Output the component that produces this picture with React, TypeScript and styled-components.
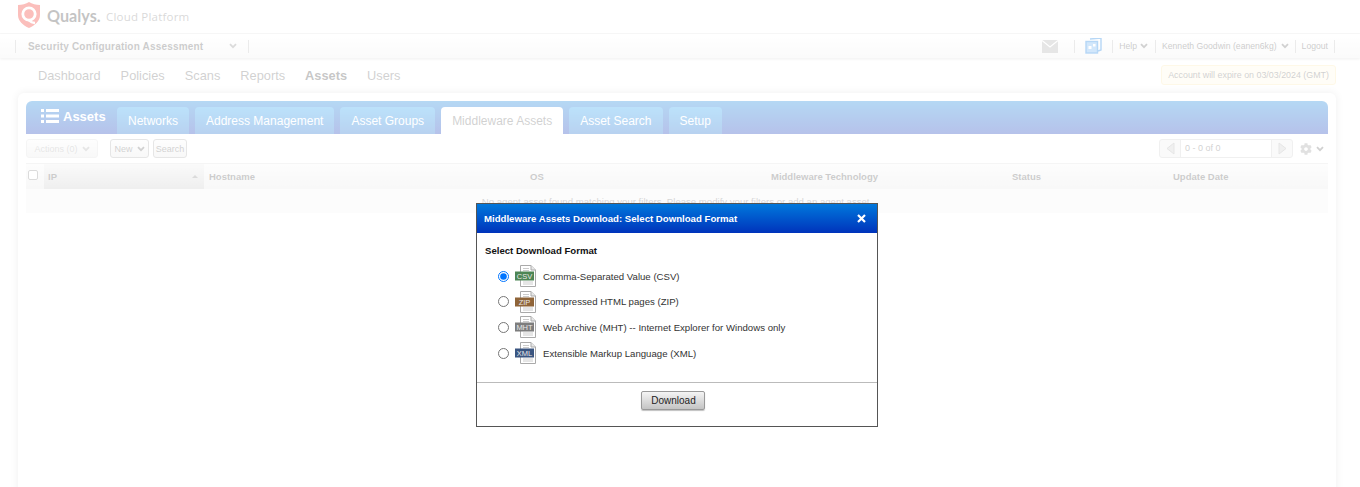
import React from 'react';
import styled, { createGlobalStyle } from 'styled-components';
import { FaCog } from 'react-icons/fa';

const GlobalStyle = createGlobalStyle`
  html, body {
    margin: 0;
    padding: 0;
    background: #fff;
    overflow: hidden;
    font-family: "Liberation Sans", Arial, sans-serif;
  }
`;

const Page = styled.div`
  position: relative;
  width: 1360px;
  height: 487px;
  overflow: hidden;
  background: #fff;
`;

const LogoBar = styled.div`
  height: 34px;
  display: flex;
  align-items: flex-start;
  padding: 2px 0 0 18px;
  box-sizing: border-box;
  border-bottom: 1px solid #e8e8e8;
`;

const Brand = styled.span`
  font-family: Lato, sans-serif;
  font-size: 16.2px;
  font-weight: 700;
  line-height: 27px;
  color: #3a3a3a;
  margin-left: 7px;
  width: 53px;
`;

const BrandSub = styled.span`
  font-family: "Open Sans", sans-serif;
  font-size: 11.5px;
  line-height: 29px;
  color: #808080;
  margin-left: 6px;
  letter-spacing: 0.2px;
`;

const SubBar = styled.div`
  height: 24px;
  display: flex;
  align-items: center;
  justify-content: space-between;
  padding: 0 25px 0 15px;
  background: linear-gradient(#fff, #f0f0f0);
  box-shadow: 0 1px 3px rgba(0, 0, 0, 0.2);
  position: relative;
`;

const BarGroup = styled.div`
  display: flex;
  align-items: center;
  height: 100%;
`;

const Divider = styled.span<{ $ml?: number; $mr?: number }>`
  width: 1px;
  height: 13px;
  background: #bbb;
  margin-left: ${(p) => p.$ml ?? 0}px;
  margin-right: ${(p) => p.$mr ?? 0}px;
`;

const Spacer = styled.span<{ $w: number }>`
  width: ${(p) => p.$w}px;
`;

const ModuleName = styled.span`
  font-size: 10px;
  font-weight: bold;
  letter-spacing: 0.19px;
  color: #555;
  margin-left: 12px;
`;

const BarText = styled.span`
  font-size: 8.65px;
  color: #555;
  white-space: nowrap;
`;

const NavRow = styled.div`
  height: 35px;
  display: flex;
  align-items: flex-start;
  justify-content: space-between;
  padding: 0 24px 0 38px;
`;

const NavLinks = styled.div`
  display: flex;
  gap: 20px;
  padding-top: 9px;
`;

const NavLink = styled.span<{ $active?: boolean }>`
  font-size: 12.8px;
  line-height: 17px;
  color: ${(p) => (p.$active ? '#444' : '#666')};
  font-weight: ${(p) => (p.$active ? 'bold' : 'normal')};
`;

const ExpireNote = styled.div`
  margin-top: 7px;
  height: 18px;
  padding: 0 6px;
  display: flex;
  align-items: center;
  font-size: 8.9px;
  color: #666;
  background: #fff8e4;
  border: 1px solid #fbe6b0;
  border-radius: 3px;
`;

const Card = styled.div`
  margin: 0 24px 0 18px;
  height: 420px;
  padding: 8px 8px 0;
  background: #fff;
  border-radius: 6px 6px 0 0;
  box-shadow: 0 0 8px rgba(0, 0, 0, 0.22);
`;

const Band = styled.div`
  height: 33px;
  display: flex;
  align-items: flex-end;
  padding-left: 15px;
  border-radius: 6px 6px 0 0;
  background: linear-gradient(#087dda, #0a33b9);
`;

const BandTitle = styled.div`
  align-self: flex-start;
  display: flex;
  align-items: center;
  gap: 4px;
  width: 76px;
  height: 30px;
  color: #fff;
  font-size: 13px;
  font-weight: bold;
`;

const Tabs = styled.div`
  display: flex;
  gap: 6px;
`;

const Tab = styled.div<{ $active?: boolean }>`
  height: 27px;
  padding: 0 11px;
  display: flex;
  align-items: center;
  font-size: 12px;
  border-radius: 4px 4px 0 0;
  color: ${(p) => (p.$active ? '#666' : '#fff')};
  background: ${(p) => (p.$active ? '#fff' : 'linear-gradient(#1e9cf0, #1267cc)')};
`;

const Toolbar = styled.div`
  height: 29px;
  display: flex;
  align-items: center;
  justify-content: space-between;
  box-sizing: border-box;
  padding: 0 4px 0 0;
`;

const ToolGroup = styled.div`
  display: flex;
  align-items: center;
`;

const ToolButton = styled.div<{ $w: number; $ml?: number; $disabled?: boolean }>`
  width: ${(p) => p.$w}px;
  height: 19px;
  box-sizing: border-box;
  margin-left: ${(p) => p.$ml ?? 0}px;
  display: flex;
  align-items: center;
  justify-content: center;
  gap: 4px;
  font-size: 9px;
  color: ${(p) => (p.$disabled ? '#aaa' : '#666')};
  background: linear-gradient(#fafafa, #e8e8e8);
  border: 1px solid ${(p) => (p.$disabled ? '#ddd' : '#aaa')};
  border-radius: 3px;
`;

const Pager = styled.div`
  display: flex;
  width: 134px;
  height: 19px;
  box-sizing: border-box;
  border: 1px solid #ccc;
  border-radius: 3px;
  background: #eee;
`;

const PagerArrow = styled.div`
  width: 20px;
  display: flex;
  align-items: center;
  justify-content: center;
`;

const PagerValue = styled.div`
  flex: 1;
  background: #fff;
  border-left: 1px solid #ccc;
  border-right: 1px solid #ccc;
  padding-left: 4px;
  font-size: 9px;
  line-height: 17px;
  color: #666;
`;

const GearWrap = styled.div`
  display: flex;
  align-items: center;
  gap: 4px;
  margin-left: 7px;
  color: #999;
`;

const TableHead = styled.div`
  height: 26px;
  display: grid;
  grid-template-columns: 18px 160px 321px 241px 241px 161px 1fr;
  box-sizing: border-box;
  border-top: 1px solid #ddd;
  background: linear-gradient(#f8f8f8, #e6e6e6);
`;

const HeadCell = styled.div<{ $sorted?: boolean }>`
  display: flex;
  align-items: center;
  justify-content: space-between;
  padding: 0 5px 0 ${(p) => (p.$sorted ? 4 : 5)}px;
  font-size: 9.5px;
  font-weight: bold;
  color: #555;
  background: ${(p) => (p.$sorted ? 'linear-gradient(#eee, #c8c8c8)' : 'transparent')};
`;

const CheckCell = styled.div`
  padding: 6px 0 0 2px;
`;

const HeadCheck = styled.span`
  display: block;
  width: 10px;
  height: 10px;
  background: #fff;
  border: 1px solid #888;
  border-radius: 2px;
  box-sizing: border-box;
`;

const SortMark = styled.span`
  width: 0;
  height: 0;
  border-left: 3px solid transparent;
  border-right: 3px solid transparent;
  border-bottom: 3px solid #888;
  margin-right: 1px;
`;

const EmptyRow = styled.div`
  height: 24px;
  display: flex;
  align-items: center;
  justify-content: center;
  padding-top: 1px;
  box-sizing: border-box;
  background: #f3f3f3;
  font-size: 9.6px;
  color: #777;
`;

const Overlay = styled.div`
  position: absolute;
  inset: 0;
  background: rgba(255, 255, 255, 0.7);
`;

const Modal = styled.div`
  position: absolute;
  left: 476px;
  top: 203px;
  width: 402px;
  height: 224px;
  box-sizing: border-box;
  border: 1px solid #555;
  background: #fff;
  display: flex;
  flex-direction: column;
`;

const ModalHeader = styled.div`
  height: 29px;
  flex: none;
  display: flex;
  align-items: center;
  justify-content: space-between;
  box-sizing: border-box;
  padding: 0 11px 1px 7px;
  background: linear-gradient(#0078dc, #0033bb);
  color: #fff;
  font-size: 9.65px;
  font-weight: bold;
`;

const ModalBody = styled.div`
  flex: 1;
  padding: 12px 8px 0;
`;

const SectionTitle = styled.div`
  font-size: 9.6px;
  font-weight: bold;
  line-height: 12px;
  color: #111;
  margin-bottom: 8px;
`;

const OptionList = styled.div`
  display: flex;
  flex-direction: column;
  gap: 3.7px;
  padding-left: 13px;
`;

const Option = styled.label`
  height: 22px;
  display: flex;
  align-items: center;
  font-size: 9.62px;
  color: #333;
`;

const Radio = styled.input`
  width: 11px;
  height: 11px;
  margin: 0 6px 0 0;
`;

const OptionText = styled.span`
  margin-left: 7px;
`;

const ModalFooter = styled.div`
  height: 44px;
  flex: none;
  box-sizing: border-box;
  border-top: 1px solid #bbb;
  display: flex;
  justify-content: center;
  padding-top: 8px;
`;

const DownloadButton = styled.button`
  width: 64px;
  height: 19px;
  padding: 0 0 0 2px;
  margin-left: -9px;
  font-family: inherit;
  font-size: 10px;
  color: #222;
  border: 1px solid #999;
  border-radius: 2px;
  background: linear-gradient(#f4f4f4, #c4c4c4);
  box-shadow: 0 1px 1px rgba(0, 0, 0, 0.25);
`;

const Chevron = ({ color = '#666', width = 8 }: { color?: string; width?: number }) => (
  <svg width={width} height="6" viewBox="0 0 8 6" fill="none">
    <path d="M1 1.2 L4 4.2 L7 1.2" stroke={color} strokeWidth="1.8" />
  </svg>
);

const QualysMark = () => (
  <svg width="22" height="26" viewBox="0 0 22 26">
    <path
      d="M11 0 C14 2 18 3 22 3 V13 C22 19 17 23.5 11 26 C5 23.5 0 19 0 13 V3 C4 3 8 2 11 0 Z"
      fill="#f0281e"
    />
    <circle cx="11" cy="12" r="6.2" fill="none" stroke="#fff" strokeWidth="2.8" />
    <path d="M11 18.5 C12.5 20 14.5 20.8 17 21" fill="none" stroke="#fff" strokeWidth="2.4" />
  </svg>
);

const ListIcon = () => (
  <svg width="18" height="16" viewBox="0 0 18 16" fill="#fff">
    <rect x="0" y="1" width="3" height="3" />
    <rect x="5" y="1" width="13" height="3" />
    <rect x="0" y="6.5" width="3" height="3" />
    <rect x="5" y="6.5" width="13" height="3" />
    <rect x="0" y="12" width="3" height="3" />
    <rect x="5" y="12" width="13" height="3" />
  </svg>
);

const EnvelopeIcon = () => (
  <svg width="16" height="13" viewBox="0 0 16 13">
    <rect width="16" height="13" fill="#aaa" />
    <path d="M0 0.5 L8 7 L16 0.5" fill="none" stroke="#fff" strokeWidth="1.2" />
  </svg>
);

const PhotoStack = () => (
  <svg width="17" height="16" viewBox="0 0 17 16">
    <path d="M5 1 L16 0 L16 12 L13 13" fill="none" stroke="#0a78e0" strokeWidth="1.4" />
    <rect x="1" y="3.5" width="11.5" height="11.5" fill="#6ab0f2" stroke="#0a78e0" strokeWidth="1.4" />
    <rect x="3.5" y="8" width="3" height="3" fill="#fff" />
    <rect x="8" y="6" width="2.5" height="2.5" fill="#fff" />
  </svg>
);

const PagerTriangle = ({ flip }: { flip?: boolean }) => (
  <svg width="9" height="13" viewBox="0 0 9 13">
    <path d={flip ? 'M1 1 L8 6.5 L1 12 Z' : 'M8 1 L1 6.5 L8 12 Z'} fill="#ccc" stroke="#aaa" />
  </svg>
);

const CloseIcon = () => (
  <svg width="9" height="9" viewBox="0 0 9 9">
    <path d="M1 1 L8 8 M8 1 L1 8" stroke="#fff" strokeWidth="2.2" />
  </svg>
);

const FileIcon = ({ label, color }: { label: string; color: string }) => (
  <svg width="21" height="22" viewBox="0 0 21 22">
    <path d="M5.5 0.5 H16 L20.5 5 V21.5 H5.5 Z" fill="#fff" stroke="#aaa" />
    <path d="M16 0.5 V5 H20.5" fill="#e8e8e8" stroke="#aaa" />
    <path d="M8 3.5 H14 M8 5.5 H14 M8 17 H18 M8 19 H18" stroke="#ccc" />
    <rect x="0" y="6.5" width="19" height="9" fill={color} />
    <text
      x="9.5"
      y="13.8"
      textAnchor="middle"
      fontSize="7.5"
      fontFamily="Liberation Sans, sans-serif"
      fill="#e8e8e8"
    >
      {label}
    </text>
  </svg>
);

const tabs = ['Networks', 'Address Management', 'Asset Groups', 'Middleware Assets', 'Asset Search', 'Setup'];
const navItems = ['Dashboard', 'Policies', 'Scans', 'Reports', 'Assets', 'Users'];
const columns = ['Hostname', 'OS', 'Middleware Technology', 'Status', 'Update Date'];
const formats = [
  { label: 'CSV', color: '#4d8554', text: 'Comma-Separated Value (CSV)', checked: true },
  { label: 'ZIP', color: '#8f6438', text: 'Compressed HTML pages (ZIP)' },
  { label: 'MHT', color: '#7d7d7d', text: 'Web Archive (MHT) -- Internet Explorer for Windows only' },
  { label: 'XML', color: '#3a5580', text: 'Extensible Markup Language (XML)' },
];

export default function App() {
  return (
    <Page>
      <GlobalStyle />
      <LogoBar>
        <QualysMark />
        <Brand>Qualys.</Brand>
        <BrandSub>Cloud Platform</BrandSub>
      </LogoBar>
      <SubBar>
        <BarGroup>
          <Divider />
          <ModuleName>Security Configuration Assessment</ModuleName>
          <Spacer $w={26} />
          <Chevron color="#888" />
          <Divider $ml={11} />
        </BarGroup>
        <BarGroup>
          <EnvelopeIcon />
          <Divider $ml={16} $mr={10} />
          <PhotoStack />
          <Divider $ml={10} $mr={6} />
          <BarText>Help</BarText>
          <Spacer $w={3} />
          <Chevron />
          <Divider $ml={7} $mr={6} />
          <BarText>Kenneth Goodwin (eanen6kg)</BarText>
          <Spacer $w={4} />
          <Chevron />
          <Divider $ml={6} $mr={6} />
          <BarText>Logout</BarText>
          <Divider $ml={6} />
        </BarGroup>
      </SubBar>
      <NavRow>
        <NavLinks>
          {navItems.map((item) => (
            <NavLink key={item} $active={item === 'Assets'}>
              {item}
            </NavLink>
          ))}
        </NavLinks>
        <ExpireNote>Account will expire on 03/03/2024 (GMT)</ExpireNote>
      </NavRow>
      <Card>
        <Band>
          <BandTitle>
            <ListIcon />
            Assets
          </BandTitle>
          <Tabs>
            {tabs.map((tab) => (
              <Tab key={tab} $active={tab === 'Middleware Assets'}>
                {tab}
              </Tab>
            ))}
          </Tabs>
        </Band>
        <Toolbar>
          <ToolGroup>
            <ToolButton $w={72} $disabled>
              Actions (0) <Chevron color="#aaa" />
            </ToolButton>
            <ToolButton $w={39} $ml={12}>
              New <Chevron />
            </ToolButton>
            <ToolButton $w={34} $ml={4}>
              Search
            </ToolButton>
          </ToolGroup>
          <ToolGroup>
            <Pager>
              <PagerArrow>
                <PagerTriangle />
              </PagerArrow>
              <PagerValue>0 - 0 of 0</PagerValue>
              <PagerArrow>
                <PagerTriangle flip />
              </PagerArrow>
            </Pager>
            <GearWrap>
              <FaCog size={12} />
              <Chevron />
            </GearWrap>
          </ToolGroup>
        </Toolbar>
        <TableHead>
          <CheckCell>
            <HeadCheck />
          </CheckCell>
          <HeadCell $sorted>
            IP
            <SortMark />
          </HeadCell>
          {columns.map((col) => (
            <HeadCell key={col}>{col}</HeadCell>
          ))}
        </TableHead>
        <EmptyRow>No agent asset found matching your filters. Please modify your filters or add an agent asset.</EmptyRow>
      </Card>
      <Overlay />
      <Modal>
        <ModalHeader>
          Middleware Assets Download: Select Download Format
          <CloseIcon />
        </ModalHeader>
        <ModalBody>
          <SectionTitle>Select Download Format</SectionTitle>
          <OptionList>
            {formats.map((format) => (
              <Option key={format.label}>
                <Radio type="radio" name="format" defaultChecked={format.checked} />
                <FileIcon label={format.label} color={format.color} />
                <OptionText>{format.text}</OptionText>
              </Option>
            ))}
          </OptionList>
        </ModalBody>
        <ModalFooter>
          <DownloadButton>Download</DownloadButton>
        </ModalFooter>
      </Modal>
    </Page>
  );
}
